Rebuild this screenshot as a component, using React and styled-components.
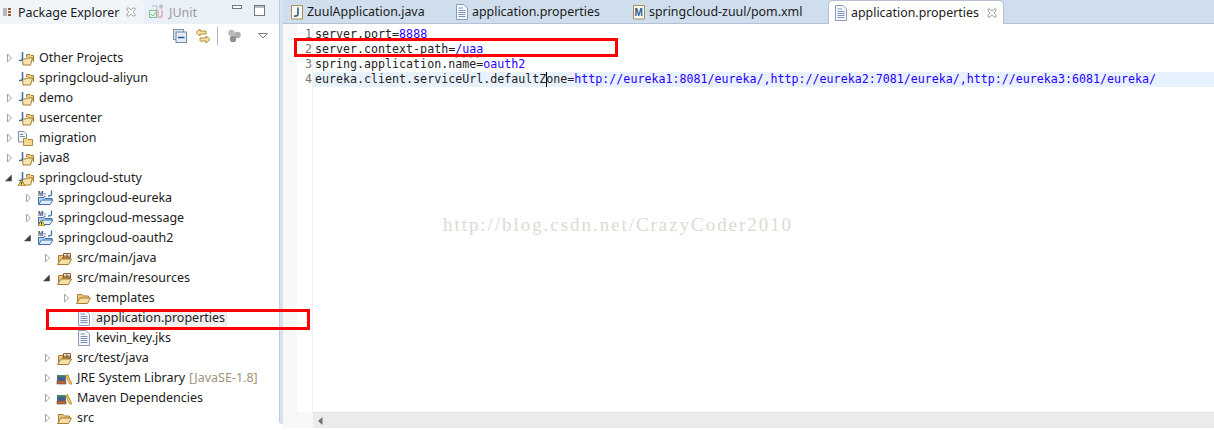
import React from "react";
import styled, { createGlobalStyle } from "styled-components";

const Global = createGlobalStyle`
  html, body { margin: 0; padding: 0; background: #fff; }
  body { font-family: "Noto Sans", sans-serif; color: #1c1c1c; }
`;

const uiFont = `"Noto Sans", "Open Sans", sans-serif`;

const Page = styled.div`
  position: relative;
  width: 1214px;
  height: 430px;
  overflow: hidden;
  display: flex;
  background: #fff;
`;

/* left view */
const LeftPanel = styled.div`
  width: 279px;
  flex: none;
  display: flex;
  flex-direction: column;
  overflow: hidden;
`;
const ViewTabs = styled.div`
  height: 24px;
  flex: none;
  display: flex;
  align-items: center;
  background: #eaf0f7;
  font: 12.5px ${uiFont};
`;
const ViewTab = styled.div`
  height: 24px;
  display: flex;
  align-items: center;
  gap: ${(p) => (p.$active ? "7px" : "3px")};
  padding: ${(p) => (p.$active ? "0 0 0 3px" : "0 0 0 5px")};
  width: ${(p) => (p.$active ? "144px" : "auto")};
  box-sizing: border-box;
  background: ${(p) => (p.$active ? "#f1f5fa" : "transparent")};
  border-top-right-radius: ${(p) => (p.$active ? "5px" : "0")};
  color: ${(p) => (p.$active ? "#1c1c1c" : "#9a9a9a")};
  white-space: nowrap;
`;
const ViewButtons = styled.div`
  margin-left: auto;
  display: flex;
  align-items: flex-start;
  gap: 12px;
  padding: 0 14px 4px 0;
`;
const ViewToolbar = styled.div`
  height: 24px;
  flex: none;
  display: flex;
  align-items: center;
  padding-left: 173px;
`;
const ToolSep = styled.div`
  width: 1px;
  height: 18px;
  background: #b9b9b9;
  margin: 0 9px 0 6px;
`;
const ToolGap = styled.span`
  width: ${(p) => p.$w}px;
  flex: none;
`;
const Tree = styled.div`
  display: flex;
  flex-direction: column;
`;
const Row = styled.div`
  height: 20px;
  flex: none;
  display: flex;
  align-items: center;
  padding-left: ${(p) => 3 + p.$level * 19}px;
  font: 12.5px/20px ${uiFont};
  white-space: nowrap;
`;
const ArrowSlot = styled.span`
  width: 11px;
  height: 20px;
  padding-left: 2px;
  flex: none;
  display: flex;
  align-items: center;
`;
const RowIcon = styled.span`
  width: 18px;
  height: 16px;
  flex: none;
  display: flex;
  justify-content: flex-end;
  margin-right: 5px;
`;
const Selected = styled.span`
  display: flex;
  align-items: center;
  height: 19px;
  margin-left: -4px;
  padding: 0 1px 0 3px;
  background: #f1f1f1;
  border: 1px solid #e6e6e6;
  box-sizing: border-box;
`;
const Decoration = styled.span`
  color: #a0937a;
  margin-left: 4px;
`;

const Sash = styled.div`
  width: 4px;
  flex: none;
  background: #d9e0f0;
  border-left: 1px solid #c5cbdc;
  box-sizing: border-box;
  height: 424px;
  border-bottom-left-radius: 3px;
`;

/* editor */
const EditorPanel = styled.div`
  flex: 1;
  min-width: 0;
  display: flex;
  flex-direction: column;
`;
const EditorTabs = styled.div`
  height: 23px;
  flex: none;
  display: flex;
  background: #cfdeed;
  border-bottom: 1px solid #b6bfd3;
  font: 12.4px ${uiFont};
  color: #1c1c1c;
`;
const EditorTab = styled.div`
  height: ${(p) => (p.$active ? "24px" : "23px")};
  width: ${(p) => p.$width}px;
  flex: none;
  box-sizing: border-box;
  display: flex;
  align-items: center;
  gap: 3px;
  padding-left: ${(p) => (p.$active ? "5px" : "7px")};
  white-space: nowrap;
  ${(p) =>
    p.$active &&
    `background:#fff;border:1px solid #b6bfd3;border-bottom:none;border-radius:5px 5px 0 0;`}
`;
const TabClose = styled.span`
  display: flex;
  margin-left: 5px;
`;
const EditorBody = styled.div`
  flex: 1;
  min-height: 0;
  display: flex;
  flex-direction: column;
`;
const EditorMain = styled.div`
  flex: 1;
  min-height: 0;
  display: flex;
`;
const Annotation = styled.div`
  width: 14px;
  flex: none;
  background: #f8f8f8;
`;
const Gutter = styled.div`
  width: 15px;
  flex: none;
  padding-top: 3px;
  border-right: 1px solid #f1f1f1;
  text-align: right;
  font: 11.65px/15px "DejaVu Sans Mono", monospace;
  color: #787878;
`;
const NumberLine = styled.div`
  height: 15px;
`;
const Code = styled.div`
  flex: 1;
  min-width: 0;
  padding-top: 3px;
  font: 11.65px/15px "DejaVu Sans Mono", monospace;
`;
const CodeLine = styled.div`
  position: relative;
  height: 15px;
  padding-left: 2px;
  white-space: pre;
  color: #222;
  background: ${(p) => (p.$current ? "#e8f2fe" : "transparent")};
`;
const Value = styled.span`
  color: #2a00ff;
`;
const Squiggle = styled(Value)`
  text-decoration: underline wavy #d49a9a 1px;
`;
const Caret = styled.span`
  position: absolute;
  left: 233px;
  top: 0;
  width: 1px;
  height: 15px;
  background: #000;
`;
const ScrollRow = styled.div`
  height: 16px;
  flex: none;
  display: flex;
  margin-bottom: 2px;
`;
const ScrollCorner = styled.div`
  width: 30px;
  flex: none;
  background: #f8f8f8;
`;
const ScrollTrack = styled.div`
  flex: 1;
  background: #ebebeb;
  border-top: 1px solid #e2e2e2;
  display: flex;
  align-items: center;
  padding-left: 5px;
`;

/* things lying over the content */
const RedBox = styled.div`
  position: absolute;
  left: ${(p) => p.$x}px;
  top: ${(p) => p.$y}px;
  width: ${(p) => p.$w}px;
  height: ${(p) => p.$h}px;
  box-sizing: border-box;
  border: 3px solid #f00;
  pointer-events: none;
`;
const Watermark = styled.div`
  position: absolute;
  left: 443px;
  top: 214px;
  font: 19px/22px "Liberation Serif", serif;
  letter-spacing: 1.95px;
  color: #dcdbd3;
  white-space: nowrap;
`;

/* icons */
const Collapsed = () => (
  <svg width="8" height="10" viewBox="0 0 8 10">
    <path d="M2.5 1 L6.5 5 L2.5 9 Z" fill="#fff" stroke="#a3a3a3" />
  </svg>
);
const Expanded = () => (
  <svg width="8" height="8" viewBox="0 0 8 8">
    <path d="M6.5 1 V7 H.5 Z" fill="#3c3c3c" stroke="#555" strokeWidth=".6" />
  </svg>
);

const OpenFolder = ({ y = 0 }) => (
  <g transform={`translate(0 ${y})`}>
    <path d="M4.5 12 V4.5 H9 L10.5 6 H15.5 V8" fill="#e9c47a" stroke="#a67f30" strokeLinejoin="round" />
    <path d="M3.5 13.5 L7 8 H17.5 L14.5 13.5 Z" fill="#f6dfa8" stroke="#a67f30" strokeLinejoin="round" />
  </g>
);

const WarnBadge = ({ x = 0 }) => (
  <g transform={`translate(${x} 0)`}>
    <path d="M3.5 10 L7 16 H0 Z" fill="#f7d65a" stroke="#8a701a" strokeWidth=".8" />
    <rect x="3.1" y="12" width=".9" height="2" fill="#333" />
    <rect x="3.1" y="14.5" width=".9" height=".9" fill="#333" />
  </g>
);

const ProjectIcon = ({ warn }) => (
  <svg width="18" height="16" viewBox="0 0 18 16">
    <path d="M10.5 7 V4.5 H14 L15 5.5 H17.5 V12" fill="#eccb86" stroke="#a67f30" />
    <path d="M6.5 9 H10 L11 8 H16.5 L14.5 15 H7 Z" fill="#f8e2ae" stroke="#a67f30" strokeLinejoin="round" />
    <path d="M6.5 2 V8 Q6.5 11 3 10.5" fill="none" stroke="#3a6ea5" strokeWidth="1.5" />
    {warn && <WarnBadge x={2} />}
  </svg>
);

const MavenIcon = ({ warn }) => (
  <svg width="18" height="16" viewBox="0 0 18 16">
    <text x="3" y="6" fontSize="6.5" fontWeight="700" fontFamily="Liberation Sans" fill="#3d4f7a">M</text>
    <text x="8.6" y="6.5" fontSize="4.5" fontFamily="Liberation Sans" fill="#3d4f7a">2</text>
    <path d="M16.5 .5 V4.5 Q16.5 6 13 6" fill="none" stroke="#3a6ea5" strokeWidth="1.3" />
    <path d="M3.5 14.5 V7.5 H9 L10 8.5 H17 V10" fill="#bcd6f2" stroke="#3f6ea8" />
    <path d="M3.5 14.5 L6.5 10 H18 L15 14.5 Z" fill="#dfecfa" stroke="#3f6ea8" />
    {warn && <WarnBadge x={3} />}
  </svg>
);

const FolderIcon = () => (
  <svg width="18" height="16" viewBox="0 0 18 16">
    <OpenFolder y={0} />
  </svg>
);

const PackageIcon = () => (
  <svg width="18" height="16" viewBox="0 0 18 16">
    <OpenFolder y={1} />
    <path d="M9.5 8 V3.5 H16.5 V8 M9.5 6 H16.5 M13 3.5 V8 M8 8 H17" fill="none" stroke="#8a5a2a" strokeWidth="1" />
  </svg>
);

const SharedFolderIcon = () => (
  <svg width="18" height="16" viewBox="0 0 18 16">
    <path d="M2.5 1.5 H8 L10.5 4 V12 H2.5 Z" fill="#f3f6fb" stroke="#7e8fae" />
    <path d="M4 4.5 H7 M4 6.5 H9" stroke="#6f86ad" />
    <path d="M7.5 8.5 H11 L12 9.5 H16.5 V15.5 H7.5 Z" fill="#f6d98e" stroke="#b08a36" />
  </svg>
);

const LibraryIcon = () => (
  <svg width="18" height="16" viewBox="0 0 18 16">
    <rect x="3.5" y="5.5" width="8" height="2.4" fill="#3e7a70" stroke="#2f5a54" strokeWidth=".6" />
    <rect x="3.5" y="8.2" width="8" height="2.4" fill="#3d5aa0" stroke="#2e4478" strokeWidth=".6" />
    <rect x="3" y="11" width="9" height="3" fill="#b5683c" stroke="#7e4424" strokeWidth=".6" />
    <path d="M13.5 4 L18 14 H15.5 L12 6.5 Z" fill="#efc25d" stroke="#a9822f" strokeWidth=".7" />
  </svg>
);

const FileIcon = () => (
  <svg width="14" height="16" viewBox="0 0 14 16">
    <path d="M1.5 .5 H9 L12.5 4 V15.5 H1.5 Z" fill="#f4f7fc" stroke="#8b9bb8" />
    <path d="M3.5 4 H8 M3.5 6.5 H10.5 M3.5 8.5 H10.5 M3.5 10.5 H10.5 M3.5 12.5 H10.5" stroke="#7d93bd" />
  </svg>
);

const JavaFileIcon = () => (
  <svg width="14" height="16" viewBox="0 0 14 16">
    <path d="M1.5 1.5 H12.5 V15 H1.5 Z" fill="#fbf7ea" stroke="#a69062" />
    <path d="M8 3.5 V10 Q8 12.5 4 12" fill="none" stroke="#2c5c9a" strokeWidth="1.6" />
  </svg>
);

const PomFileIcon = () => (
  <svg width="14" height="16" viewBox="0 0 14 16">
    <path d="M1.5 1.5 H12.5 V15 H1.5 Z" fill="#fbf7ea" stroke="#a69062" />
    <text x="2.4" y="12" fontSize="10" fontWeight="700" fontFamily="Liberation Sans" fill="#2c5c9a">M</text>
  </svg>
);

const CloseX = () => (
  <svg width="10" height="10" viewBox="0 0 10 10">
    <path d="M1 1 H3 L5 3.2 L7 1 H9 V3 L7 5 L9 7 V9 H7 L5 6.8 L3 9 H1 V7 L3 5 L1 3 Z" fill="#fff" stroke="#8f8f8f" strokeWidth=".8" />
  </svg>
);

const ViewMenuIcon = () => (
  <svg width="8" height="12" viewBox="0 0 8 12">
    <path d="M1 2 V10 M3 2 V10" stroke="#777" />
    <rect x="5" y="2" width="3" height="2" fill="#9a5b2b" />
    <rect x="5" y="5" width="3" height="2" fill="#9a5b2b" />
    <rect x="5" y="8" width="3" height="2" fill="#9a5b2b" />
  </svg>
);

const JUnitIcon = () => (
  <svg width="17" height="16" viewBox="0 0 17 16">
    <rect x="0.5" y="6.5" width="7" height="7" fill="#e7f5ec" stroke="#79c09a" />
    <path d="M2 10 L4 12 L7 8" fill="none" stroke="#79c09a" />
    <path d="M9 6 V11 Q9 13.5 11 13.5 Q13 13.5 13 11 V6" fill="none" stroke="#e3a8ad" strokeWidth="1.4" />
    <path d="M12 0 V5 M9.8 2.5 H14.2 M10.4 1 L13.6 4 M13.6 1 L10.4 4" stroke="#a9b7c8" strokeWidth=".9" />
    <path d="M3 2 H8 V6" fill="none" stroke="#9dc0df" />
  </svg>
);

const MinimizeIcon = () => (
  <svg width="10" height="4" viewBox="0 0 10 4">
    <rect x=".5" y=".5" width="9" height="3" fill="#fff" stroke="#777" />
  </svg>
);
const MaximizeIcon = () => (
  <svg width="11" height="11" viewBox="0 0 11 11">
    <rect x=".5" y=".5" width="10" height="10" fill="#fff" stroke="#777" />
    <path d="M1 2 H10" stroke="#777" />
  </svg>
);

const CollapseAllIcon = () => (
  <svg width="14" height="14" viewBox="0 0 14 14">
    <rect x=".5" y=".5" width="10" height="10" fill="#dce6ef" stroke="#7f95a8" />
    <rect x="3" y="3" width="10.5" height="10.5" fill="#e4edf5" stroke="#6e8aa4" />
    <path d="M5 8.5 H11.5" stroke="#1d5c94" strokeWidth="1.5" />
  </svg>
);
const LinkIcon = () => (
  <svg width="16" height="16" viewBox="0 0 16 16">
    <path d="M5 1 L1 4.5 L5 8 V6 H11 V3 H5 Z" fill="#f8e3ad" stroke="#b58a2e" />
    <path d="M11 8 L15 11.5 L11 15 V13 H5 V10 H11 Z" fill="#f8e3ad" stroke="#b58a2e" />
  </svg>
);
const GroupIcon = () => (
  <svg width="14" height="14" viewBox="0 0 14 14">
    <circle cx="4.5" cy="4" r="3.2" fill="#b7bcb7" />
    <circle cx="10.5" cy="6" r="3.2" fill="#a9aea9" />
    <circle cx="6" cy="10" r="3.2" fill="#8e928e" />
  </svg>
);
const DropIcon = () => (
  <svg width="10" height="6" viewBox="0 0 10 6">
    <path d="M.5 .5 H9.5 L5 5 Z" fill="#fff" stroke="#7a7a7a" />
  </svg>
);
const ScrollLeft = () => (
  <svg width="5" height="8" viewBox="0 0 5 8">
    <path d="M4.5 0 V8 L0 4 Z" fill="#707070" />
  </svg>
);

const rows = [
  { level: 0, arrow: "c", icon: <ProjectIcon />, text: "Other Projects" },
  { level: 0, icon: <ProjectIcon />, text: "springcloud-aliyun" },
  { level: 0, arrow: "c", icon: <ProjectIcon />, text: "demo" },
  { level: 0, arrow: "c", icon: <ProjectIcon />, text: "usercenter" },
  { level: 0, arrow: "c", icon: <SharedFolderIcon />, text: "migration" },
  { level: 0, arrow: "c", icon: <ProjectIcon />, text: "java8" },
  { level: 0, arrow: "e", icon: <ProjectIcon warn />, text: "springcloud-stuty" },
  { level: 1, arrow: "c", icon: <MavenIcon />, text: "springcloud-eureka" },
  { level: 1, arrow: "c", icon: <MavenIcon warn />, text: "springcloud-message" },
  { level: 1, arrow: "e", icon: <MavenIcon />, text: "springcloud-oauth2" },
  { level: 2, arrow: "c", icon: <PackageIcon />, text: "src/main/java" },
  { level: 2, arrow: "e", icon: <PackageIcon />, text: "src/main/resources" },
  { level: 3, arrow: "c", icon: <FolderIcon />, text: "templates" },
  { level: 3, icon: <FileIcon />, text: "application.properties", selected: true },
  { level: 3, icon: <FileIcon />, text: "kevin_key.jks" },
  { level: 2, arrow: "c", icon: <PackageIcon />, text: "src/test/java" },
  { level: 2, arrow: "c", icon: <LibraryIcon />, text: "JRE System Library", note: "[JavaSE-1.8]" },
  { level: 2, arrow: "c", icon: <LibraryIcon />, text: "Maven Dependencies" },
  { level: 2, arrow: "c", icon: <FolderIcon />, text: "src" },
];

export default function App() {
  return (
    <Page>
      <Global />
      <LeftPanel>
        <ViewTabs>
          <ViewTab $active>
            <ViewMenuIcon />
            Package Explorer
            <CloseX />
          </ViewTab>
          <ViewTab>
            <JUnitIcon />
            JUnit
          </ViewTab>
          <ViewButtons>
            <MinimizeIcon />
            <MaximizeIcon />
          </ViewButtons>
        </ViewTabs>
        <ViewToolbar>
          <CollapseAllIcon />
          <ToolGap $w={8} />
          <LinkIcon />
          <ToolSep />
          <GroupIcon />
          <ToolGap $w={17} />
          <DropIcon />
        </ViewToolbar>
        <Tree>
          {rows.map((r) => (
            <Row key={r.text} $level={r.level}>
              <ArrowSlot>
                {r.arrow === "c" && <Collapsed />}
                {r.arrow === "e" && <Expanded />}
              </ArrowSlot>
              <RowIcon>{r.icon}</RowIcon>
              {r.selected ? <Selected>{r.text}</Selected> : r.text}
              {r.note && <Decoration>{r.note}</Decoration>}
            </Row>
          ))}
        </Tree>
      </LeftPanel>
      <Sash />
      <EditorPanel>
        <EditorTabs>
          <EditorTab $width={165}>
            <JavaFileIcon />
            ZuulApplication.java
          </EditorTab>
          <EditorTab $width={177}>
            <FileIcon />
            application.properties
          </EditorTab>
          <EditorTab $width={203}>
            <PomFileIcon />
            springcloud-zuul/pom.xml
          </EditorTab>
          <EditorTab $active $width={176}>
            <FileIcon />
            application.properties
            <TabClose>
              <CloseX />
            </TabClose>
          </EditorTab>
        </EditorTabs>
        <EditorBody>
          <EditorMain>
            <Annotation />
            <Gutter>
              {[1, 2, 3, 4].map((n) => (
                <NumberLine key={n}>{n}</NumberLine>
              ))}
            </Gutter>
            <Code>
              <CodeLine>
                server.port=<Value>8888</Value>
              </CodeLine>
              <CodeLine>
                server.context-path=<Squiggle>/uaa</Squiggle>
              </CodeLine>
              <CodeLine>
                spring.application.name=<Value>oauth2</Value>
              </CodeLine>
              <CodeLine $current>
                eureka.client.serviceUrl.defaultZone=
                <Value>
                  http://eureka1:8081/eureka/,http://eureka2:7081/eureka/,http://eureka3:6081/eureka/
                </Value>
                <Caret />
              </CodeLine>
            </Code>
          </EditorMain>
          <ScrollRow>
            <ScrollCorner />
            <ScrollTrack>
              <ScrollLeft />
            </ScrollTrack>
          </ScrollRow>
        </EditorBody>
      </EditorPanel>
      <RedBox $x={46} $y={309} $w={264} $h={21} />
      <RedBox $x={294} $y={38} $w={324} $h={19} />
      <Watermark>http://blog.csdn.net/CrazyCoder2010</Watermark>
    </Page>
  );
}
